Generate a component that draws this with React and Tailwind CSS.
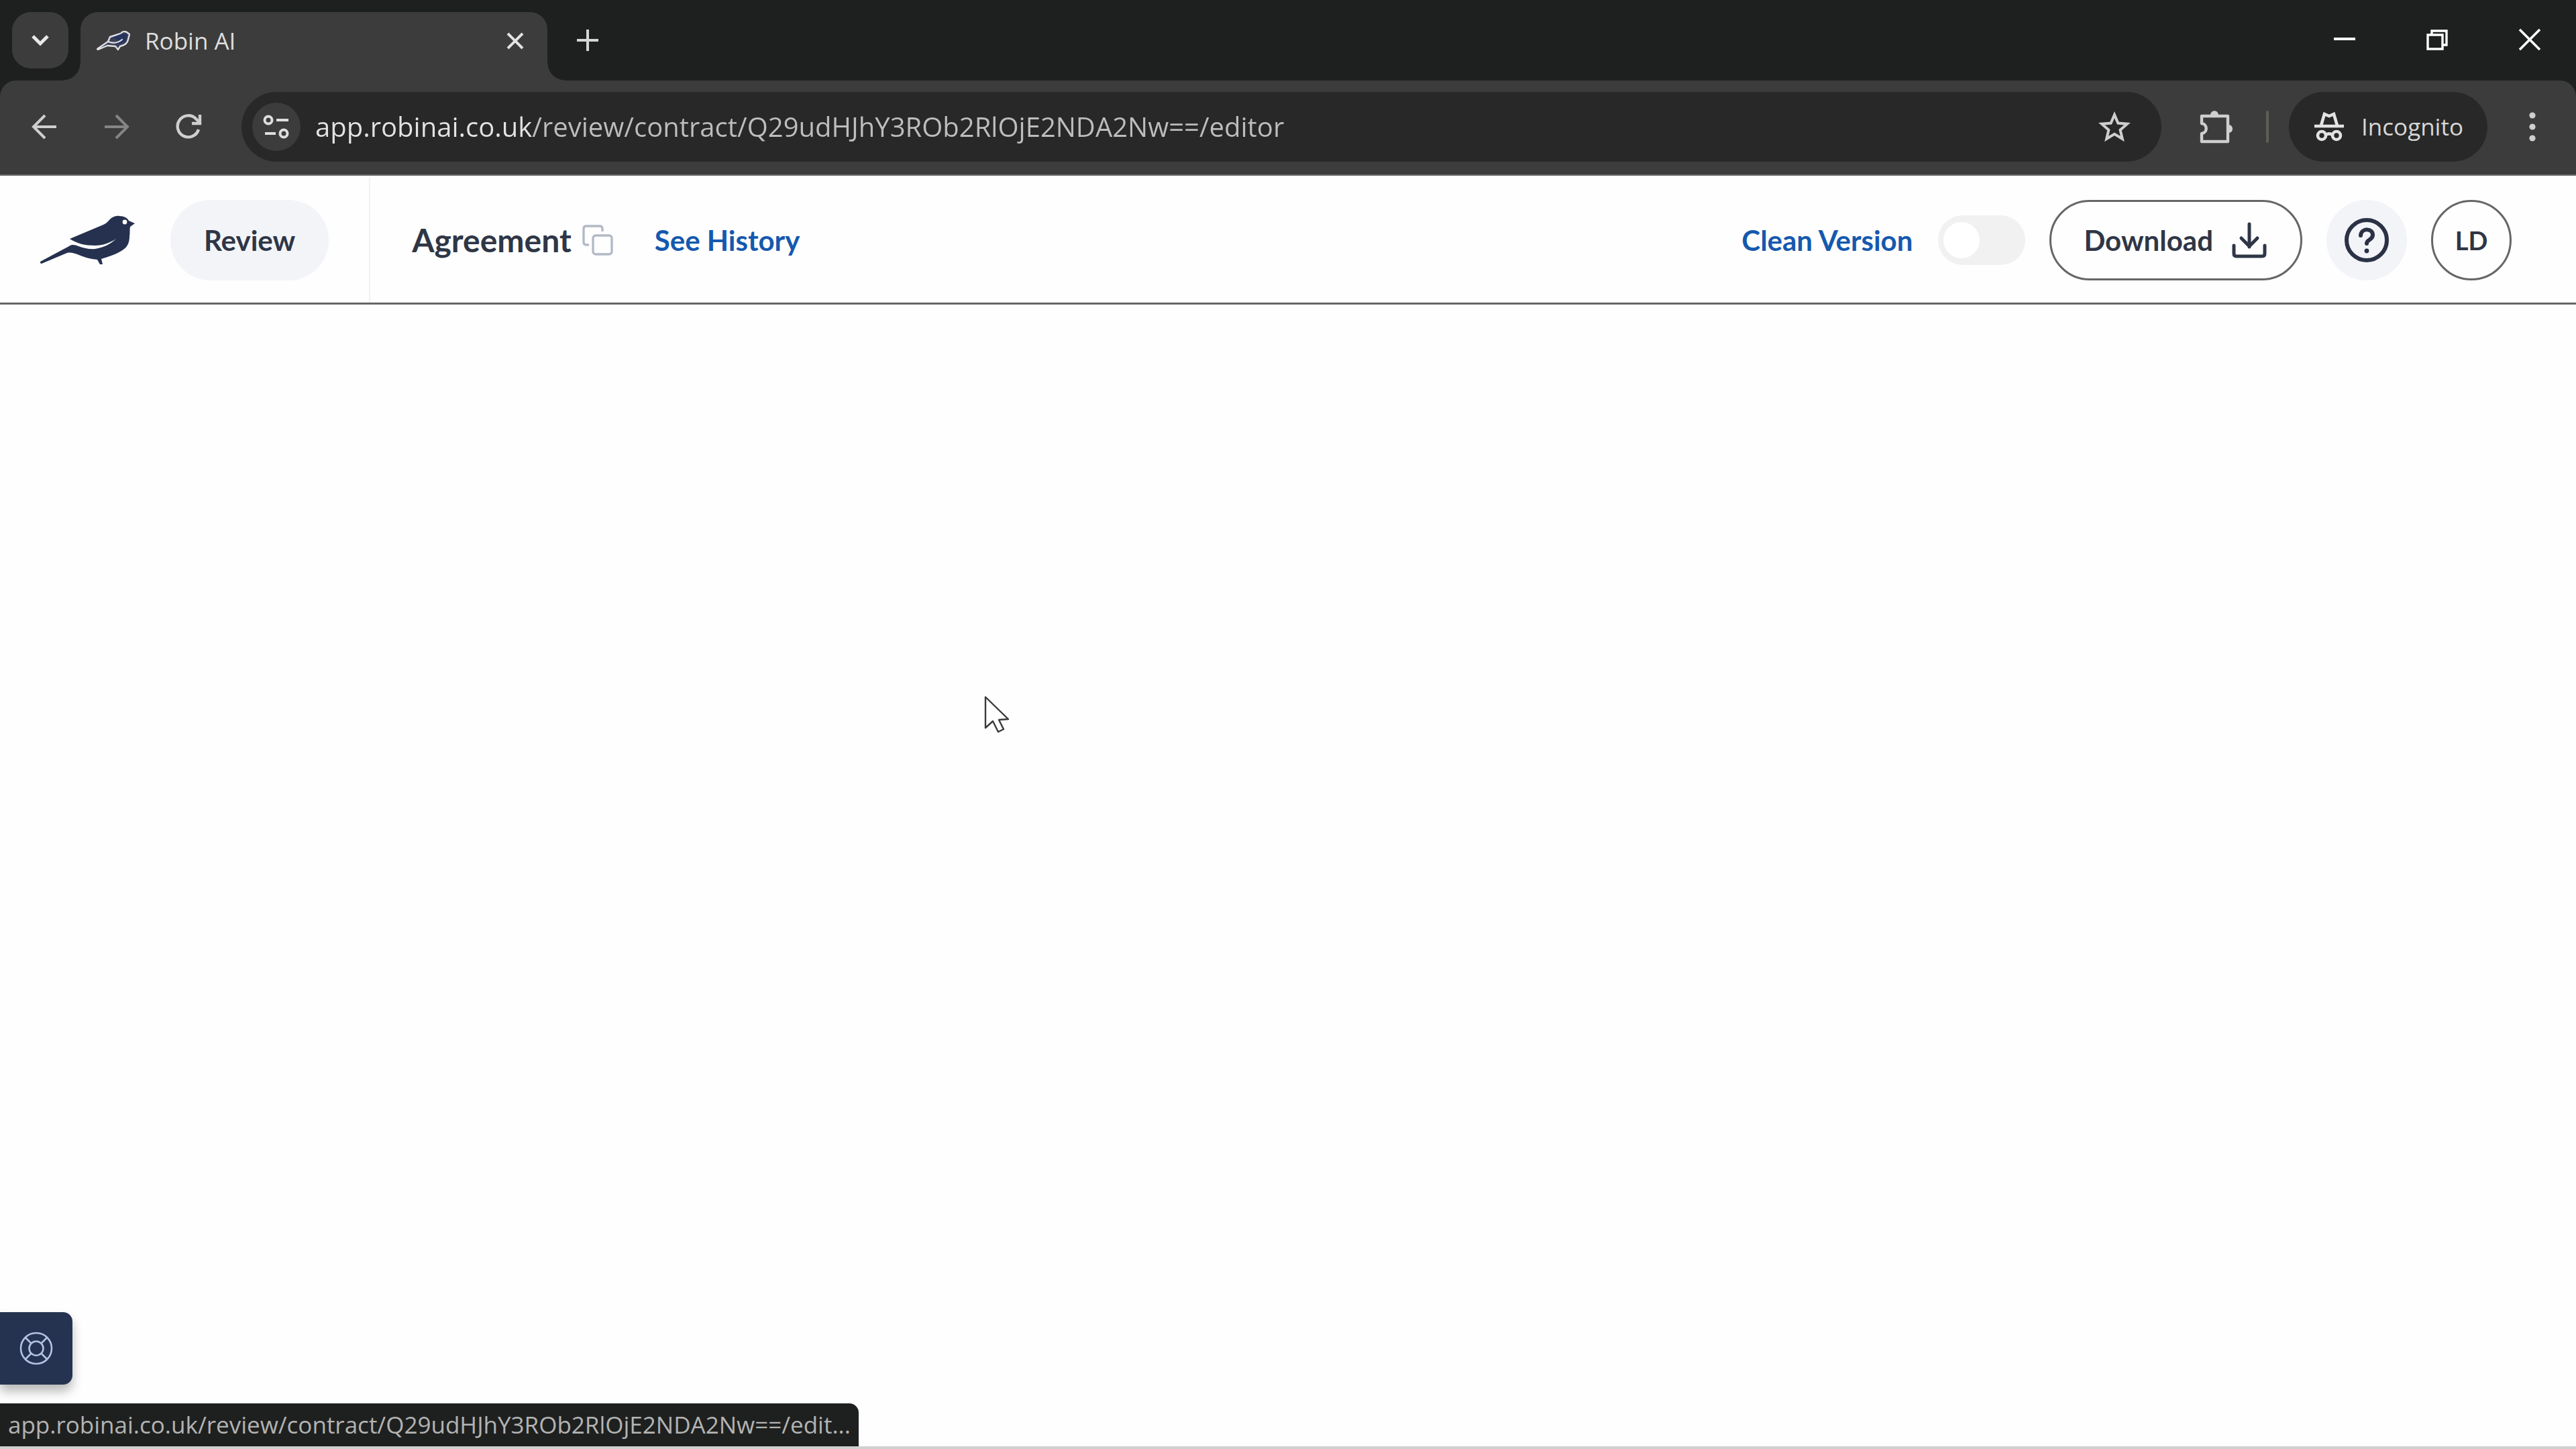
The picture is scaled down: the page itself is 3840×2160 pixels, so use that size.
import { useState } from 'react';

const PAGE_URL = 'app.robinai.co.uk/review/contract/Q29udHJhY3ROb2RlOjE2NDA2Nw==/editor';
const STATUS_URL = 'app.robinai.co.uk/review/contract/Q29udHJhY3ROb2RlOjE2NDA2Nw==/edit...';

function RobinLogo() {
  return (
    <svg className="w-[142px] h-[74px]" viewBox="0 0 142 74" fill="#25314f">
      <path d="M44 35L94 14C98 12 99 11 102 8C106 3 112 0 118 1C125 1 130 4 132 8L141 12L134 17C133 22 134 26 133 32C133 40 130 47 124 51C114 58 101 62 91 65L93 73L89 73L85 66C74 65 64 62 55 58C49 56 45 55 40 56L2 72C0 72 0 70 0 69L43 46C47 43 52 44 57 46C65 49 74 51 82 50C95 48 106 42 113 35C104 41 93 45 82 45C66 45 55 42 44 35Z" />
      <circle cx="126" cy="10" r="3.4" fill="#fff" />
    </svg>
  );
}

function Favicon() {
  return (
    <svg className="w-[50px] h-[30px]" viewBox="0 0 50 30" strokeLinejoin="round" strokeLinecap="round">
      <path d="M1 27L17 16L20 9L36 4C38 1 42 0 45 2L49 5L47 13C46 19 42 21 35 23L32 28L28 23L16 22L2 28Z" fill="#3b4153" stroke="#dcdfe6" strokeWidth="2.4" />
      <path d="M23 10L38 4L45 5L44 14C40 19 32 21 24 18L35 15Z" fill="#26345f" />
      <path d="M17 16C24 19 32 18 38 13" fill="none" stroke="#dcdfe6" strokeWidth="2.2" />
    </svg>
  );
}

function TabStrip() {
  return (
    <div className="flex items-start h-[120px] pl-[18px] bg-[#1e201f]">
      <button aria-label="Search tabs" className="flex items-center justify-center w-[84px] h-[84px] mt-[18px] rounded-[28px] bg-[#3c3c3c]">
        <svg className="w-[26px] h-[18px]" viewBox="0 0 26 18" fill="none" stroke="#e8e8e8" strokeWidth="5">
          <path d="M2 3L13 14L24 3" />
        </svg>
      </button>
      <div className="relative flex items-center w-[696px] h-[102px] mt-[18px] ml-[18px] pl-[24px] pr-[34px] pb-[16px] rounded-t-[26px] bg-[#3c3c3c]">
        <span className="absolute bottom-0 -left-[26px] w-[26px] h-[26px] bg-[radial-gradient(circle_at_0_0,transparent_25px,#3c3c3c_26px)]" />
        <span className="absolute bottom-0 -right-[26px] w-[26px] h-[26px] bg-[radial-gradient(circle_at_100%_0,transparent_25px,#3c3c3c_26px)]" />
        <Favicon />
        <span className="flex-1 ml-[22px] text-[35px] leading-[48px] text-[#dedede]">Robin AI</span>
        <button aria-label="Close tab">
          <svg className="w-[28px] h-[28px]" viewBox="0 0 28 28" fill="none" stroke="#e3e3e3" strokeWidth="4">
            <path d="M3 3L25 25M25 3L3 25" />
          </svg>
        </button>
      </div>
      <button aria-label="New tab" className="mt-[44px] ml-[44px]">
        <svg className="w-[32px] h-[32px]" viewBox="0 0 32 32" fill="none" stroke="#d6d6d6" strokeWidth="4">
          <path d="M16 0V32M0 16H32" />
        </svg>
      </button>
      <div className="flex gap-[104px] ml-auto mt-[42px] mr-[52px]">
        <button aria-label="Minimise">
          <svg className="w-[34px] h-[34px]" viewBox="0 0 34 34" fill="none" stroke="#fff" strokeWidth="4">
            <path d="M1 16H33" />
          </svg>
        </button>
        <button aria-label="Restore">
          <svg className="w-[34px] h-[34px]" viewBox="0 0 34 34" fill="none" stroke="#fff" strokeWidth="3.4">
            <path d="M3 10H25V31H3ZM9 10V4H31V25H25" />
          </svg>
        </button>
        <button aria-label="Close window">
          <svg className="w-[34px] h-[34px]" viewBox="0 0 34 34" fill="none" stroke="#fff" strokeWidth="3.6">
            <path d="M2 2L32 32M32 2L2 32" />
          </svg>
        </button>
      </div>
    </div>
  );
}

function Toolbar() {
  const [url, setUrl] = useState(PAGE_URL);

  return (
    <div className="bg-[#1e201f]">
      <div className="flex items-center h-[142px] pl-[46px] pr-[58px] pb-[2px] rounded-t-[24px] border-b-2 border-[#6b6b6b] bg-[#3c3c3c]">
        <div className="flex gap-[68px] mr-[56px]">
          <button aria-label="Back">
            <svg className="w-[40px] h-[40px]" viewBox="0 0 40 40" fill="none" stroke="#cfcfcf" strokeWidth="4">
              <path d="M38 20H5M21 3L4 20L21 37" />
            </svg>
          </button>
          <button aria-label="Forward">
            <svg className="w-[40px] h-[40px]" viewBox="0 0 40 40" fill="none" stroke="#858585" strokeWidth="4">
              <path d="M2 20H35M19 3L36 20L19 37" />
            </svg>
          </button>
          <button aria-label="Reload">
            <svg className="w-[42px] h-[40px]" viewBox="0 0 42 40" fill="none" stroke="#cfcfcf" strokeWidth="4.4">
              <path d="M34 24A16 16 0 1 1 30 8L35 13" />
              <path d="M36 2V15H24" />
            </svg>
          </button>
        </div>
        <div className="flex items-center flex-1 h-[104px] pl-[16px] pr-[46px] rounded-full bg-[#282828]">
          <button aria-label="View site information" className="flex items-center justify-center w-[72px] h-[72px] rounded-full bg-[#3c3c3c]">
            <svg className="w-[40px] h-[36px]" viewBox="0 0 40 36" fill="none" stroke="#dedede" strokeWidth="4">
              <circle cx="8" cy="8" r="5.5" />
              <path d="M20 8H38M3 28H19" />
              <circle cx="31" cy="28" r="5.5" />
            </svg>
          </button>
          <input
            type="text"
            aria-label="Address"
            value={url}
            onChange={(e) => setUrl(e.target.value)}
            className="flex-1 min-w-0 h-[64px] ml-[22px] text-[40px] leading-[64px] outline-none text-transparent bg-clip-text bg-[linear-gradient(90deg,#e3e3e3_322px,#bdbdbd_322px)]"
          />
          <button aria-label="Bookmark this tab">
            <svg className="w-[48px] h-[48px]" viewBox="0 0 48 48" fill="none" stroke="#cfcfcf" strokeWidth="4">
              <path d="M24 6L29.3 18.5L43 19.7L32.6 28.7L35.8 42L24 34.9L12.2 42L15.4 28.7L5 19.7L18.7 18.5Z" />
            </svg>
          </button>
        </div>
        <button aria-label="Extensions" className="ml-[56px]">
          <svg className="w-[52px] h-[52px]" viewBox="0 0 52 52" fill="none" stroke="#cfcfcf" strokeWidth="4.4" strokeLinejoin="round">
            <path d="M4 10H43V48H4V36C13 35 13 22 4 21Z" />
            <path d="M17 9C17 0 29 0 29 9ZM44 23C52 23 52 35 44 35Z" fill="#cfcfcf" stroke="none" />
          </svg>
        </button>
        <div className="w-[4px] h-[48px] ml-[48px] mr-[30px] rounded-full bg-[#5d5d58]" />
        <button className="flex items-center h-[104px] pl-[38px] pr-[36px] gap-[26px] rounded-full bg-[#282828] text-[35px] leading-[48px] text-[#d6d6d6]">
          <svg className="w-[44px] h-[44px]" viewBox="0 0 44 44" fill="none" stroke="#e3e3e3" strokeWidth="4.6">
            <path d="M0 21H44" />
            <path d="M10 20L15 3L22 6L29 3L34 20" />
            <circle cx="11" cy="35" r="6" />
            <circle cx="33" cy="35" r="6" />
            <path d="M17 34C20 32 24 32 27 34" />
          </svg>
          Incognito
        </button>
        <button aria-label="Menu" className="ml-[60px]">
          <svg className="w-[14px] h-[44px]" viewBox="0 0 14 44" fill="#cfcfcf">
            <circle cx="7" cy="5" r="4.6" />
            <circle cx="7" cy="22" r="4.6" />
            <circle cx="7" cy="39" r="4.6" />
          </svg>
        </button>
      </div>
    </div>
  );
}

function AppHeader() {
  const [clean, setClean] = useState(false);

  return (
    <header className="flex items-center h-[192px] pt-[2px] pr-[96px] border-b-3 border-[#666666] font-['Lato',sans-serif] font-bold text-[42px] leading-[56px] text-[#2f3646]">
      <div className="flex items-center self-stretch pl-[60px] pr-[60px] gap-[52px] border-r-2 border-[#f1f1f3]">
        <RobinLogo />
        <button className="h-[120px] px-[50px] rounded-full bg-[#f2f4f8]">Review</button>
      </div>
      <div className="flex items-center ml-[62px]">
        <h1 className="text-[48px]">Agreement</h1>
        <button aria-label="Duplicate" className="ml-[16px] mr-[62px]">
          <svg className="w-[46px] h-[46px]" viewBox="0 0 46 46" fill="none" stroke="#b3bac6" strokeWidth="3.4">
            <path d="M10 30H6Q2 30 2 26V6Q2 2 6 2H26Q30 2 30 6V10" />
            <rect x="16" y="16" width="28" height="28" rx="4" />
          </svg>
        </button>
        <a href="#history" className="text-[#1559ae]">See History</a>
      </div>
      <div className="flex items-center ml-auto">
        <label htmlFor="clean-version" className="mr-[38px] text-[#1559ae]">Clean Version</label>
        <input
          id="clean-version"
          type="checkbox"
          checked={clean}
          onChange={(e) => setClean(e.target.checked)}
          className="appearance-none flex items-center w-[130px] h-[74px] px-[8px] rounded-full bg-[#f1f1f1] before:block before:w-[54px] before:h-[54px] before:rounded-full before:bg-white checked:bg-[#1559ae] checked:justify-end"
        />
        <button className="flex items-center h-[120px] ml-[36px] px-[48px] gap-[26px] rounded-full border-3 border-[#666666]">
          Download
          <svg className="w-[56px] h-[56px]" viewBox="0 0 56 56" fill="none" stroke="#2f3646" strokeWidth="5" strokeLinecap="round" strokeLinejoin="round">
            <path d="M28 4V38M16 25L28 37L40 25M5 36V48Q5 52 9 52H47Q51 52 51 48V36" />
          </svg>
        </button>
        <button aria-label="Help" className="flex items-center justify-center w-[120px] h-[120px] ml-[36px] rounded-full bg-[#f2f4f8]">
          <svg className="w-[68px] h-[68px]" viewBox="0 0 68 68" fill="none" stroke="#2b3245" strokeWidth="6" strokeLinecap="round">
            <circle cx="34" cy="34" r="30" />
            <path d="M25 27C26 15 44 16 43 27C42 34 34 33 34 39" />
            <circle cx="34" cy="50" r="3.4" fill="#2b3245" stroke="none" />
          </svg>
        </button>
        <button className="w-[120px] h-[120px] ml-[36px] rounded-full border-3 border-[#666666] text-[38px]">LD</button>
      </div>
    </header>
  );
}

export default function App() {
  return (
    <div className="flex flex-col min-h-screen bg-[#fefefe] font-['Open_Sans','Noto_Sans',sans-serif]">
      <TabStrip />
      <Toolbar />
      <AppHeader />
      <main className="relative flex flex-col flex-1 items-start justify-end">
        <svg className="absolute left-[1466px] top-[582px] w-[40px] h-[58px]" viewBox="0 0 40 58" fill="#fff" stroke="#3a3a3a" strokeWidth="2.4" strokeLinejoin="round">
          <path d="M3 3V49L14 39L22 55L30 51L23 37L37 36Z" />
        </svg>
        <button aria-label="Support" className="flex items-center justify-center w-[108px] h-[108px] mb-[28px] rounded-r-[14px] bg-[#263350] shadow-[0_10px_16px_rgba(0,0,0,0.28)]">
          <svg className="w-[50px] h-[50px]" viewBox="0 0 50 50" fill="none" stroke="#b4c2e2" strokeWidth="2.6">
            <circle cx="25" cy="25" r="23" />
            <circle cx="25" cy="25" r="10.5" />
            <path d="M9 9L17.5 17.5M41 9L32.5 17.5M9 41L17.5 32.5M41 41L32.5 32.5" />
          </svg>
        </button>
        <div className="h-[64px] pl-[12px] pr-[12px] rounded-tr-[14px] bg-[#1e201f] text-[35px] leading-[64px] text-[#b3b3b3]">
          {STATUS_URL}
        </div>
        <div className="w-full h-[4px] bg-[#d0d0d0]" />
      </main>
    </div>
  );
}
